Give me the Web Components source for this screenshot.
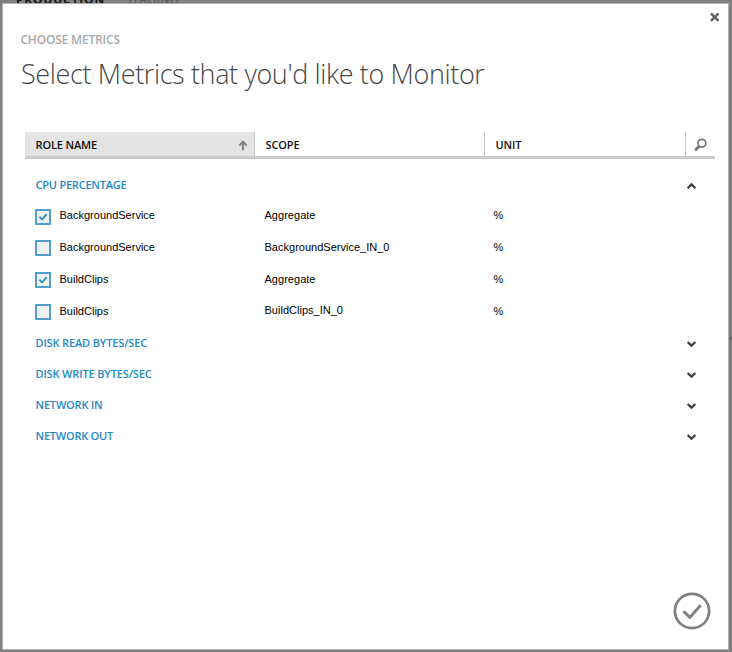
<!DOCTYPE html>
<html lang="en">
<head>
<meta charset="utf-8">
<title>Choose Metrics</title>
<style>
html,body{margin:0;width:732px;height:652px;overflow:hidden;background:#808080}
</style>
</head>
<body>
<metrics-page></metrics-page>
<script>
/* Text run whose tracking is adjusted so that it spans the given width. */
class FitText extends HTMLElement {
  connectedCallback() {
    if (this.shadowRoot) return;
    this.attachShadow({mode: 'open'}).innerHTML =
      '<style>:host{display:inline-block;white-space:nowrap}span{display:inline-block}</style><span><slot></slot></span>';
    const span = this.shadowRoot.querySelector('span');
    const n = this.textContent.length;
    const w = span.getBoundingClientRect().width;
    if (n && w) span.style.letterSpacing = ((+this.getAttribute('w') - w) / n).toFixed(3) + 'px';
  }
}
customElements.define('fit-text', FitText);

class CheckBox extends HTMLElement {
  connectedCallback() {
    this.attachShadow({mode: 'open'}).innerHTML = `
    <style>:host{display:block;box-sizing:border-box;width:16px;height:16px;border:2px solid #4f9fcf;background:#f2f2f2}
    svg{display:block}</style>
    ${this.hasAttribute('checked') ? '<svg width="12" height="12"><path d="M2.4 5.6L5 8.4L9.7 3.2" fill="none" stroke="#2f8dc6" stroke-width="1.8"/></svg>' : ''}`;
  }
}
customElements.define('check-box', CheckBox);

class MetricRow extends HTMLElement {
  connectedCallback() {
    const a = k => this.getAttribute(k);
    this.attachShadow({mode: 'open'}).innerHTML = `
    <style>
    :host{display:grid;grid-template-columns:24px 205px 229px 1fr;height:32px;padding-left:10px;box-sizing:border-box;
      font:11px/14px "Liberation Sans",Arial,sans-serif;color:#000}
    check-box{margin-top:${a('first') !== null ? 10 : 9}px}
    .t{padding:9px 0 0 .5px}
    .s{padding:${a('lift') ? 8 : 9}px 0 0 .5px}
    </style>
    <check-box ${this.hasAttribute('checked') ? 'checked' : ''}></check-box>
    <div class="t"><fit-text w="${a('nw')}">${a('name')}</fit-text></div>
    <div class="s"><fit-text w="${a('sw')}">${a('scope')}</fit-text></div>
    <div class="t">%</div>`;
  }
}
customElements.define('metric-row', MetricRow);

class MetricGroup extends HTMLElement {
  connectedCallback() {
    const open = this.hasAttribute('open');
    this.attachShadow({mode: 'open'}).innerHTML = `
    <style>
    :host{display:block}
    header{display:flex;justify-content:space-between;height:31px;padding:${open ? 1 : 0}px 18px 0 10.5px;box-sizing:border-box;
      font:600 11px/16px "Open Sans","Noto Sans",sans-serif;color:#2489c5}
    fit-text{padding-top:8px}
    svg{display:block;margin-top:13px}
    </style>
    <header><fit-text w="${this.getAttribute('w')}">${this.getAttribute('label')}</fit-text>
    <svg width="11" height="8"><path d="${open ? 'M1.6 6.2L5.5 2.4L9.4 6.2' : 'M1.6 2L5.5 5.6L9.4 2'}" fill="none" stroke="#3f3f3f" stroke-width="2.3"/></svg></header>
    <slot></slot>`;
  }
}
customElements.define('metric-group', MetricGroup);

class TableHead extends HTMLElement {
  connectedCallback() {
    this.attachShadow({mode: 'open'}).innerHTML = `
    <style>
    :host{display:grid;grid-template-columns:230px 230px 201px 29px;height:27px;box-sizing:border-box;border-bottom:3px solid #cbcbcb;
      font:600 11px/16px "Open Sans","Noto Sans",sans-serif;color:#111}
    div{box-sizing:border-box;border-right:1px solid #c9c9c9;padding:5px 6px 0 10.5px;display:flex;justify-content:space-between}
    .sorted{background:#e4e4e4}
    div:last-child{border:0;padding:6px 0 0 7px}
    svg{display:block}
    .up{margin-top:3px}
    </style>
    <div class="sorted"><fit-text w="61.5">ROLE NAME</fit-text>
      <svg class="up" width="10" height="11"><path d="M5 10.3V2M1.2 5.6L5 1.7L8.8 5.6" fill="none" stroke="#808080" stroke-width="2"/></svg></div>
    <div><fit-text w="34">SCOPE</fit-text></div>
    <div><fit-text w="26">UNIT</fit-text></div>
    <div><svg width="14" height="14"><circle cx="8.9" cy="5.2" r="3.9" fill="none" stroke="#70747a" stroke-width="1.7"/><path d="M6.2 8.2L2.1 12.2" stroke="#70747a" stroke-width="2.6"/></svg></div>`;
  }
}
customElements.define('table-head', TableHead);

class MetricsDialog extends HTMLElement {
  connectedCallback() {
    this.attachShadow({mode: 'open'}).innerHTML = `
    <style>
    :host{display:flex;flex-direction:column;box-sizing:border-box;width:727px;height:647px;background:#fff;border:1px solid #b0b0b0;
      padding:0 13px 0 22px;font-family:"Open Sans","Noto Sans",sans-serif}
    .close{align-self:flex-end;margin:8px -5px 0 0;display:block}
    .sub{margin:9px 0 0 -4.6px;font-size:12px;line-height:16px;font-weight:600;color:#a9a9a9;height:16px}
    h1{margin:8px 0 0 -4px;font-size:27px;line-height:36px;height:36px;font-weight:300;color:#484848}
    .table{margin-top:40px}
    metric-group:first-of-type{margin-top:9px}
    .ok{margin:auto 4.5px 19.5px auto;display:block}
    </style>
    <svg class="close" width="11" height="11"><path d="M1.9 1.4L9.5 8.8M9.5 1.4L1.9 8.8" stroke="#606060" stroke-width="2.4"/></svg>
    <div class="sub"><fit-text w="99.5">CHOOSE METRICS</fit-text></div>
    <h1><fit-text w="463.5">Select Metrics that you'd like to Monitor</fit-text></h1>
    <div class="table">
      <table-head></table-head>
      <metric-group open label="CPU PERCENTAGE" w="91">
        <metric-row first checked name="BackgroundService" nw="95.5" scope="Aggregate" sw="51"></metric-row>
        <metric-row name="BackgroundService" nw="95.5" scope="BackgroundService_IN_0" sw="125"></metric-row>
        <metric-row checked name="BuildClips" nw="49" scope="Aggregate" sw="51"></metric-row>
        <metric-row name="BuildClips" nw="49" scope="BuildClips_IN_0" sw="78.5" lift="1"></metric-row>
      </metric-group>
      <metric-group label="DISK READ BYTES/SEC" w="111.5"></metric-group>
      <metric-group label="DISK WRITE BYTES/SEC" w="116"></metric-group>
      <metric-group label="NETWORK IN" w="67"></metric-group>
      <metric-group label="NETWORK OUT" w="77.5"></metric-group>
    </div>
    <svg class="ok" width="38" height="38"><circle cx="19" cy="19" r="17.1" fill="none" stroke="#808080" stroke-width="2.7"/><path d="M10.6 19.4L16.9 25.4L27.6 13.3" fill="none" stroke="#808080" stroke-width="2.9"/></svg>`;
  }
}
customElements.define('metrics-dialog', MetricsDialog);

class MetricsPage extends HTMLElement {
  connectedCallback() {
    this.attachShadow({mode: 'open'}).innerHTML = `
    <style>
    :host{display:block;position:relative;box-sizing:border-box;width:732px;height:652px;overflow:hidden;
      background:#808080}
    .tabs{display:flex;gap:20px;padding-left:16px;height:3px;overflow:hidden;font:12px/16px "Open Sans","Noto Sans",sans-serif}
    .tabs fit-text{margin-top:-8px}
    .tabs fit-text:first-child{color:#151515;font-weight:700}
    .tabs fit-text:last-child{color:#555}
    metrics-dialog{margin-left:2px}
    .rule{position:absolute;right:0;top:337px;width:3px;height:3px;background:#666}
    </style>
    <nav class="tabs"><fit-text w="89">PRODUCTION</fit-text><fit-text w="54">STAGING</fit-text></nav>
    <metrics-dialog></metrics-dialog>
    <div class="rule"></div>`;
  }
}
customElements.define('metrics-page', MetricsPage);
</script>
</body>
</html>
